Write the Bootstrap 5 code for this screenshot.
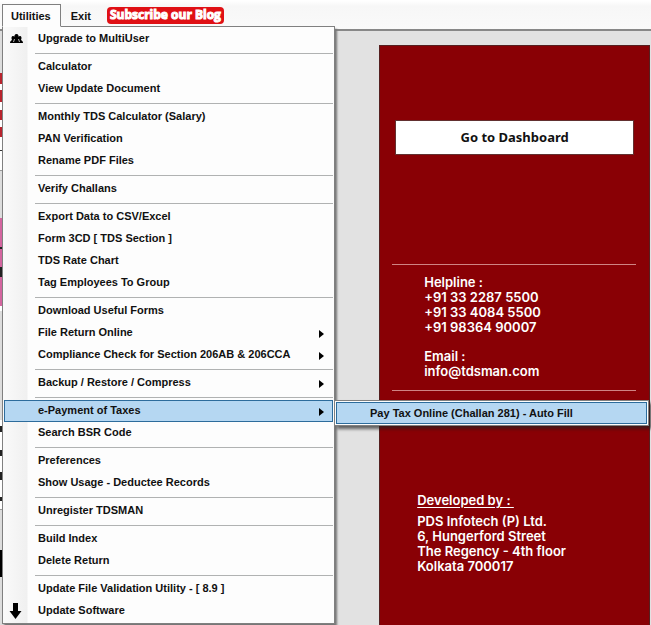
<!DOCTYPE html>
<html lang="en">
<head>
<meta charset="utf-8">
<meta name="viewport" content="width=device-width, initial-scale=1">
<title>TDSMAN</title>
<link href="https://cdn.jsdelivr.net/npm/bootstrap@5.3.0/dist/css/bootstrap.min.css" rel="stylesheet">
<style>
body { font-family: "Liberation Sans", Arial, sans-serif; font-size: 11px; font-weight: 700; line-height: 14px; color: #111; background: #e2e2e2; overflow: hidden; }
.menu-strip { height: 31px; padding: 4px 2px 0; background: linear-gradient(#fff 1px, #f7f7f7 6px, #fafafa); border-bottom: 2px solid #888; }
.menu-strip .top-item { height: 23px; padding: 0 9px; border: 1px solid transparent; border-radius: 0; font: inherit; color: #111; background: none; }
.menu-strip .top-item.open { position: relative; z-index: 1001; padding: 0 9px 0 8px; background: #fdfdfd; border-color: #808080; border-bottom-color: #fdfdfd; }
.menu-strip .blog-link { height: 17px; margin: 3px 0 0 6px; padding: 0 3px; border-radius: 4px; background: #e01015; color: #fff; font: 700 12px/16px "Open Sans", sans-serif; -webkit-text-stroke: 1px #fff; }
.utilities-menu { display: block; top: 22px; left: 0; width: 333px; padding: 1px 1px; border: 1px solid #808080; border-radius: 0; font: inherit; color: #111; background: linear-gradient(90deg, #fafafa, #f0f0f0 24px, #fdfdfd 25px); box-shadow: 2px 3px 2px #777; }
.utilities-menu .dropdown-item { display: flex; align-items: center; height: 22px; padding: 0 8px 2px 0; border: 1px solid transparent; font-weight: 700; color: #111; }
.utilities-menu .dropdown-item:hover, .utilities-menu .dropdown-item.chosen { background: #b5d7f2; border-color: #2d6c9c; }
.utilities-menu .dropdown-divider { margin: 3px 0 2px 31px; border-top: 1px solid #b0b2b2; opacity: 1; }
.item-icon { width: 33px; flex: none; display: flex; padding-left: 4px; }
.submenu { display: block; top: 0; left: 330px; width: 315px; padding: 1px; border: 1px solid #808080; border-radius: 0; font: inherit; background: #fdfdfd; box-shadow: 3px 3px 3px #222a; }
.utilities-menu .submenu .dropdown-item { padding: 0 8px 0 33px; }
.workspace { min-height: calc(100vh - 31px); }
.back-window { width: 2px; background: linear-gradient(#ddd 42px, #b9242e 42px 53px, #fff 53px 59px, #b9242e 59px 71px, #fff 71px 79px, #b9242e 79px 89px, #fff 89px 96px, #b9242e 96px 106px, #fff 106px 119px, #333 119px 120px, #fff 120px 139px, #999 139px 140px, #ddd 140px 187px, #d466a0 187px 216px, #222 216px 218px, #d466a0 218px 236px, #222 236px 246px, #d466a0 246px 275px, #fff 275px 280px, #ddd 280px 389px, #fff 389px 395px, #222 395px 401px, #fff 401px 419px, #222 419px 425px, #fff 425px 441px, #222 441px 449px, #fff 449px 466px, #222 466px 470px, #fff 470px 478px, #999 478px 479px, #ddd 479px 519px, #000 519px 546px, #ddd 546px); }
.info-panel { width: 41.6%; margin: 14px 1px 0 0; padding: 74px 13px 0 15px; border: solid #552020; border-width: 1px 1px 0; background: #890005; color: #fff; font: 600 13px/15px Inter, sans-serif; }
.dash-btn { height: 35px; margin: 0 2px 0 0; padding: 0 0 2px; border: 1px solid #623030; border-radius: 0; background: #fff; color: #111; font: 700 13px/16px "Noto Sans", sans-serif; }
.contact { margin-top: 109px; margin-left: -3px; padding: 10px 0 11px 32px; border: solid #cf8484; border-width: 1px 0; }
.email { margin-top: 14px; }
.developer { margin-top: 102px; padding-left: 22px; }
.developer h2 { margin: 0 0 6px; font: inherit; text-decoration: underline; text-underline-offset: 2px; white-space: pre; }
.contact a { color: inherit; text-decoration: none; }
</style>
<script src="https://cdn.jsdelivr.net/npm/bootstrap@5.3.0/dist/js/bootstrap.bundle.min.js" defer></script>
</head>
<body>
<header class="menu-strip">
  <nav class="d-flex align-items-start position-relative">
    <button class="btn top-item open" type="button" aria-expanded="true">Utilities</button>
    <button class="btn top-item" type="button">Exit</button>
    <a class="blog-link text-decoration-none text-nowrap" href="#">Subscribe our Blog</a>
    <div class="dropdown-menu utilities-menu">
      <a class="dropdown-item" href="#"><span class="item-icon"><svg width="15" height="14" viewBox="0 0 15 14" aria-hidden="true"><path d="M1 12c0-2 1-2 2-3-1-2-.5-4 1-4s1.500 1 1.500 2c-.5-2 .2-4 2-4s2.500 2 2 4c0-1 0-2 1.500-2s2 2 1 4c1 1 2 1 2 3z" fill="#000"/><path d="M5.500 8l-1 3M9.500 8l1 3" stroke="#fff" stroke-width=".7"/></svg></span>Upgrade to MultiUser</a>
      <hr class="dropdown-divider">
      <a class="dropdown-item" href="#"><span class="item-icon"></span>Calculator</a>
      <a class="dropdown-item" href="#"><span class="item-icon"></span>View Update Document</a>
      <hr class="dropdown-divider">
      <a class="dropdown-item" href="#"><span class="item-icon"></span>Monthly TDS Calculator (Salary)</a>
      <a class="dropdown-item" href="#"><span class="item-icon"></span>PAN Verification</a>
      <a class="dropdown-item" href="#"><span class="item-icon"></span>Rename PDF Files</a>
      <hr class="dropdown-divider">
      <a class="dropdown-item" href="#"><span class="item-icon"></span>Verify Challans</a>
      <hr class="dropdown-divider">
      <a class="dropdown-item" href="#"><span class="item-icon"></span>Export Data to CSV/Excel</a>
      <a class="dropdown-item" href="#"><span class="item-icon"></span>Form 3CD [ TDS Section ]</a>
      <a class="dropdown-item" href="#"><span class="item-icon"></span>TDS Rate Chart</a>
      <a class="dropdown-item" href="#"><span class="item-icon"></span>Tag Employees To Group</a>
      <hr class="dropdown-divider">
      <a class="dropdown-item" href="#"><span class="item-icon"></span>Download Useful Forms</a>
      <a class="dropdown-item" href="#"><span class="item-icon"></span>File Return Online<svg class="ms-auto mt-1" width="5" height="8" aria-hidden="true"><path d="M0 0l5 4-5 4z"/></svg></a>
      <a class="dropdown-item" href="#"><span class="item-icon"></span>Compliance Check for Section 206AB &amp; 206CCA<svg class="ms-auto mt-1" width="5" height="8" aria-hidden="true"><path d="M0 0l5 4-5 4z"/></svg></a>
      <hr class="dropdown-divider">
      <a class="dropdown-item" href="#"><span class="item-icon"></span>Backup / Restore / Compress<svg class="ms-auto mt-1" width="5" height="8" aria-hidden="true"><path d="M0 0l5 4-5 4z"/></svg></a>
      <hr class="dropdown-divider">
      <div class="position-relative">
        <a class="dropdown-item chosen" href="#" aria-expanded="true"><span class="item-icon"></span>e-Payment of Taxes<svg class="ms-auto mt-1" width="5" height="8" aria-hidden="true"><path d="M0 0l5 4-5 4z"/></svg></a>
        <div class="dropdown-menu submenu">
          <a class="dropdown-item chosen" href="#">Pay Tax Online (Challan 281) - Auto Fill</a>
        </div>
      </div>
      <a class="dropdown-item" href="#"><span class="item-icon"></span>Search BSR Code</a>
      <hr class="dropdown-divider">
      <a class="dropdown-item" href="#"><span class="item-icon"></span>Preferences</a>
      <a class="dropdown-item" href="#"><span class="item-icon"></span>Show Usage - Deductee Records</a>
      <hr class="dropdown-divider">
      <a class="dropdown-item" href="#"><span class="item-icon"></span>Unregister TDSMAN</a>
      <hr class="dropdown-divider">
      <a class="dropdown-item" href="#"><span class="item-icon"></span>Build Index</a>
      <a class="dropdown-item" href="#"><span class="item-icon"></span>Delete Return</a>
      <hr class="dropdown-divider">
      <a class="dropdown-item" href="#"><span class="item-icon"></span>Update File Validation Utility - [ 8.9 ]</a>
      <a class="dropdown-item" href="#"><span class="item-icon"><svg width="13" height="17" viewBox="0 0 13 17" aria-hidden="true"><path d="M4 1h5v8h3.500L6.500 17 .5 9H4z"/></svg></span>Update Software</a>
    </div>
  </nav>
</header>
<main class="workspace d-flex justify-content-between">
  <div class="back-window"></div>
  <section class="info-panel d-flex flex-column">
    <button class="btn dash-btn" type="button">Go to Dashboard</button>
    <address class="contact mb-0">
      <div>Helpline :</div>
      <div>+91 33 2287 5500</div>
      <div>+91 33 4084 5500</div>
      <div>+91 98364 90007</div>
      <div class="email">Email :<br><a href="#">info@tdsman.com</a></div>
    </address>
    <div class="developer">
      <h2>Developed by : </h2>
      <div>PDS Infotech (P) Ltd.</div>
      <div>6, Hungerford Street</div>
      <div>The Regency - 4th floor</div>
      <div>Kolkata 700017</div>
    </div>
  </section>
</main>
</body>
</html>
